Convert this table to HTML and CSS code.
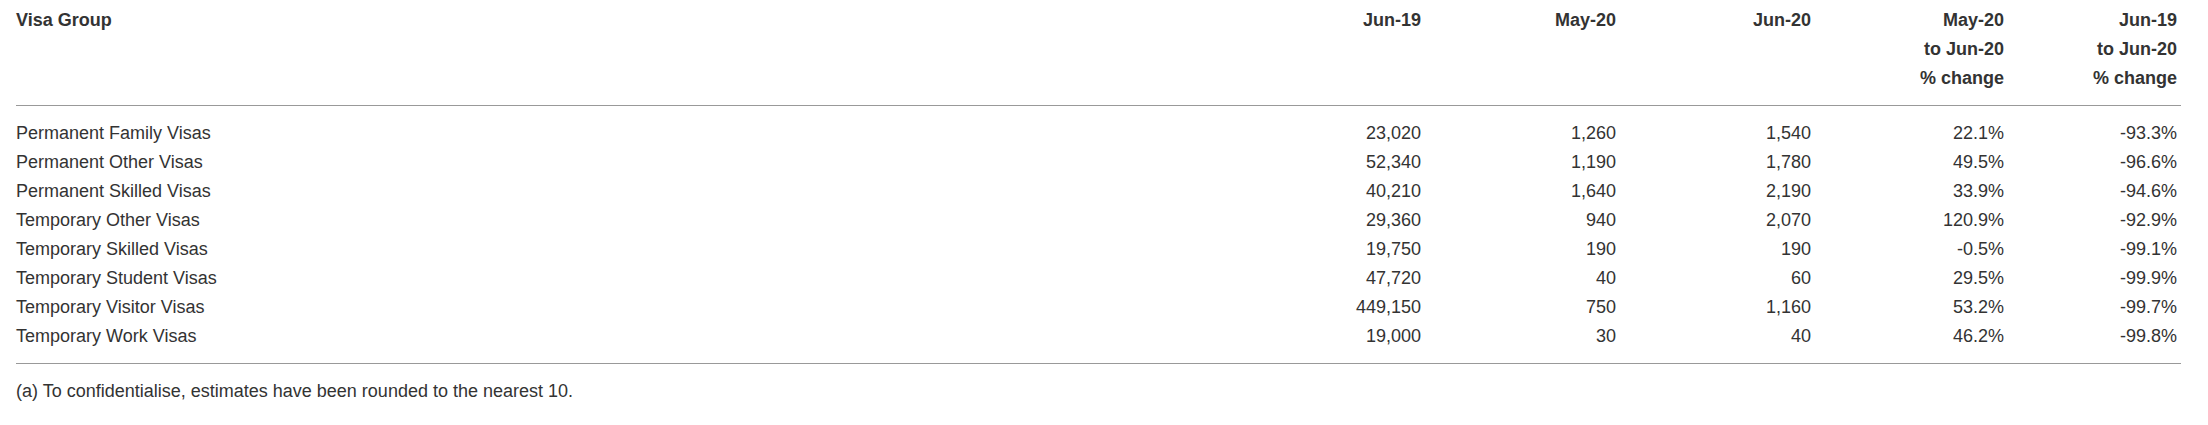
FILE: index.html
```html
<!DOCTYPE html>
<html>
<head>
	<meta charset="utf-8">
	<title>Visa Groups</title>
	<link rel="stylesheet" href="styles.css">
</head>
<body>
  <main class="report">
    <table class="visa-table">
      <colgroup>
        <col class="col-name">
        <col class="col-num">
        <col class="col-num">
        <col class="col-num">
        <col class="col-pct">
        <col class="col-last">
      </colgroup>
      <thead>
        <tr>
          <th class="name">Visa Group</th>
          <th>Jun-19</th>
          <th>May-20</th>
          <th>Jun-20</th>
          <th>May-20<br>to Jun-20<br>% change</th>
          <th>Jun-19<br>to Jun-20<br>% change</th>
        </tr>
      </thead>
      <tbody>
        <tr><td class="name">Permanent Family Visas</td><td>23,020</td><td>1,260</td><td>1,540</td><td>22.1%</td><td>-93.3%</td></tr>
        <tr><td class="name">Permanent Other Visas</td><td>52,340</td><td>1,190</td><td>1,780</td><td>49.5%</td><td>-96.6%</td></tr>
        <tr><td class="name">Permanent Skilled Visas</td><td>40,210</td><td>1,640</td><td>2,190</td><td>33.9%</td><td>-94.6%</td></tr>
        <tr><td class="name">Temporary Other Visas</td><td>29,360</td><td>940</td><td>2,070</td><td>120.9%</td><td>-92.9%</td></tr>
        <tr><td class="name">Temporary Skilled Visas</td><td>19,750</td><td>190</td><td>190</td><td>-0.5%</td><td>-99.1%</td></tr>
        <tr><td class="name">Temporary Student Visas</td><td>47,720</td><td>40</td><td>60</td><td>29.5%</td><td>-99.9%</td></tr>
        <tr><td class="name">Temporary Visitor Visas</td><td>449,150</td><td>750</td><td>1,160</td><td>53.2%</td><td>-99.7%</td></tr>
        <tr><td class="name">Temporary Work Visas</td><td>19,000</td><td>30</td><td>40</td><td>46.2%</td><td>-99.8%</td></tr>
      </tbody>
    </table>
    <p class="footnote">(a) To confidentialise, estimates have been rounded to the nearest 10.</p>
  </main>
</body>
</html>
```

FILE: styles.css
```css
html body{
  margin: 0;
  background: #fff;
}

.report{
  padding: 6px 27px 0 16px;
  font-family: "Liberation Sans", Arial, sans-serif;
  font-size: 18px;
  line-height: 29px;
  color: #333;
}

.visa-table{
  width: 100%;
  border-collapse: collapse;
  table-layout: fixed;
}

.col-num{ width: 195px; }
.col-pct{ width: 193px; }
.col-last{ width: 173px; }

.visa-table th,
.visa-table td{
  padding: 0 4px 0 0;
  text-align: right;
  vertical-align: top;
}

.visa-table th{
  font-weight: bold;
  padding-bottom: 12px;
  border-bottom: 1px solid #999;
}

.visa-table .name{
  text-align: left;
}

.visa-table tbody tr:first-child td{
  padding-top: 13px;
}

.visa-table tbody tr:last-child td{
  padding-bottom: 12px;
  border-bottom: 1px solid #999;
}

.footnote{
  margin: 13px 0 0;
}
```
